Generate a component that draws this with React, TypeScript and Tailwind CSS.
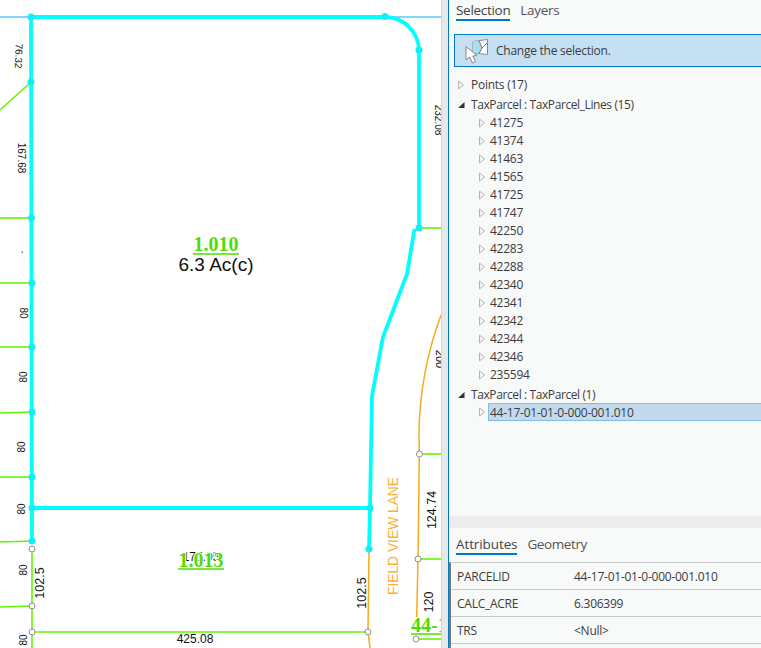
const SERIF = "font-['Liberation_Serif',serif]";

const stubs: [number, number, number, number][] = [
  [0, 110, 29, 84], [0, 218, 31, 218], [0, 283, 32, 283], [0, 347, 32, 347], [0, 413, 32, 412], [0, 477, 32, 477],
  [0, 542, 32, 541], [0, 607, 32, 606], [419, 228, 441, 228], [419, 454, 441, 454], [418, 559, 441, 559], [416, 639, 441, 639],
];
const cyanNodes: [number, number][] = [
  [31, 17], [31, 82], [31.5, 218], [32, 283], [32, 347], [32, 412], [32, 477], [32, 508], [32, 541], [385, 16.5], [419, 50], [419, 228], [370, 508], [369, 549],
];
const whiteNodes: [number, number][] = [[32, 549], [32, 606], [32, 632], [368, 632], [419.5, 454], [418, 559], [416, 639]];
const smallLabels: [string, number, number, number, number][] = [
  ["76.32", 18, 56, 92, 10], ["167.68", 21, 158, 90, 10], ["232.08", 438, 120, 90, 10],
  ["80", 23, 313, 90, 10], ["80", 24, 377, -90, 10], ["80", 22, 447, -90, 10], ["80", 22, 509, -90, 10], ["80", 24, 570, -90, 10], ["80", 24, 640, -90, 10],
  ["200", 439, 359, 90, 11],
  ["102.5", 41, 583, -90, 12.5], ["102.5", 363, 593, -90, 12.5], ["124.74", 433, 510, -90, 12.5], ["120", 430, 602, -90, 12.5],
];

function MapView() {
  return (
    <svg width="441" height="648" viewBox="0 0 441 648" className="block bg-white shrink-0 font-['Liberation_Sans',sans-serif]">
      <path d="M0 17H31M385 17H441" stroke="#5cc8f5" strokeWidth="1.5" fill="none" />
      <path d="M32 549V648" stroke="#62f500" strokeWidth="1.6" fill="none" />
      {stubs.map((s, i) => (
        <line key={i} x1={s[0]} y1={s[1]} x2={s[2]} y2={s[3]} stroke="#62f500" strokeWidth="1.6" />
      ))}
      <path d="M32 632H368" stroke="#62f500" strokeWidth="1.6" fill="none" />
      <path d="M369 549L368 632L370 648" stroke="#f8ab1e" strokeWidth="1.5" fill="none" />
      <path d="M441 315C430 345 420 385 419 430L419.3 454L418 559L416.7 617" stroke="#f8ab1e" strokeWidth="1.5" fill="none" />
      <path d="M31 17H385A34 34 0 0 1 419 50V228M414.5 229L407 274L383 337L372 396L370 508L369 549M31 17L32 541M32 508H370" stroke="#00ffff" strokeWidth="3.8" fill="none" />
      {cyanNodes.map((n, i) => (
        <circle key={i} cx={n[0]} cy={n[1]} r="3.5" fill="#14eef5" />
      ))}
      {whiteNodes.map((n, i) => (
        <circle key={i} cx={n[0]} cy={n[1]} r="3" fill="#fff" stroke="#8c8c8c" strokeWidth="1" />
      ))}
      {smallLabels.map((l, i) => (
        <text key={i} transform={`translate(${l[1]} ${l[2]}) rotate(${l[3]})`} textAnchor="middle" dominantBaseline="middle" fontSize={l[4]} fill="#111">
          {l[0]}
        </text>
      ))}
      <rect x="21.5" y="251.5" width="1.5" height="1.5" fill="#777" />
      <text x="195" y="643" textAnchor="middle" fontSize="12" fill="#111">425.08</text>
      <text x="201" y="561" textAnchor="middle" fontSize="12" fill="#111">175.05</text>
      <text transform="translate(394 536) rotate(-90)" textAnchor="middle" dominantBaseline="middle" fontSize="13.8" fill="#fbb034">FIELD VIEW LANE</text>
      <text x="216" y="271" textAnchor="middle" fontSize="19" fill="#111">6.3 Ac(c)</text>
      <text x="216" y="251" textAnchor="middle" fontSize="20" fontWeight="700" fill="#4fdd05" className={SERIF}>1.010</text>
      <path d="M193 254H239" stroke="#4fdd05" strokeWidth="1.5" />
      <text x="201" y="567" textAnchor="middle" fontSize="20" fontWeight="700" fill="#4fdd05" stroke="#fff" strokeWidth="2" paintOrder="stroke" className={SERIF}>1.013</text>
      <path d="M178 569H224" stroke="#4fdd05" strokeWidth="1.5" />
      <text x="411" y="632" fontSize="20" fontWeight="700" fill="#4fdd05" className={SERIF}>44-17</text>
      <path d="M411 634H441" stroke="#4fdd05" strokeWidth="1.5" />
    </svg>
  );
}

function Tri({ open }: { open?: boolean }) {
  return open ? (
    <svg width="8" height="8" viewBox="0 0 8 8" className="shrink-0"><path d="M7.5 1V7H1Z" fill="#333" /></svg>
  ) : (
    <svg width="8" height="10" viewBox="0 0 8 10" className="shrink-0"><path d="M1.5 1L6.5 5L1.5 9Z" fill="#f4f4f4" stroke="#b5b5b5" /></svg>
  );
}

const ids = ["41275", "41374", "41463", "41565", "41725", "41747", "42250", "42283", "42288", "42340", "42341", "42342", "42344", "42346", "235594"];

function Row({ label, open, indent }: { label: string; open?: boolean; indent?: boolean }) {
  return (
    <div className={indent ? "flex items-center h-[18px] pt-px pl-[29px] gap-[4px]" : "flex items-center h-[18px] pt-px pl-[8px] gap-[6px]"}>
      <Tri open={open} />
      <span className={open ? "tracking-[-0.4px]" : ""}>{label}</span>
    </div>
  );
}

function SelIcon() {
  return (
    <svg width="24" height="26" viewBox="0 0 24 26" className="shrink-0">
      <path d="M8 3.5L22.5 1.5V16.5L8 15Z" fill="#fff" stroke="#8d8d8d" />
      <path d="M8 3.5L14 2.5L17 10L14 15.6L8 15Z" fill="#a9dcf3" />
      <path d="M14 2.5L17 10L14 15.6M17 10L22 5" stroke="#777" fill="none" />
      <path d="M1 8.5V22L4.5 19L7.5 25L10.5 23.5L7.8 18L12 17.5Z" fill="#fff" stroke="#888" strokeLinejoin="round" />
    </svg>
  );
}

function AttrRow({ k, v }: { k: string; v: string }) {
  return (
    <div className="flex items-center h-[27px] pt-[2px] border-b border-[#c9cccd]">
      <span className="w-[123px] pl-[6px] shrink-0">{k}</span>
      <span>{v}</span>
    </div>
  );
}

export default function App() {
  return (
    <div className="flex w-[761px] h-[648px] overflow-hidden bg-white">
      <MapView />
      <div className="w-[7px] shrink-0 bg-[#e8e8e8] border-l border-[#d2d2d2]" />
      <div className="flex-1 min-w-0 flex flex-col bg-[#f8f9f9] border-l border-[#0079c1] text-[#3c3c3c] text-[12px] font-['Open_Sans',sans-serif] tracking-[-0.25px]">
        <div className="flex items-start h-[34px] pl-[7px] gap-[10px] text-[13.5px] tracking-[-0.3px] text-[#444]">
          <span className="h-[21px] leading-[20px] border-b-[2px] border-[#0079c1]">Selection</span>
          <span className="leading-[20px] text-[#555]">Layers</span>
        </div>
        <div className="flex items-center h-[33px] ml-[5px] pl-[10px] gap-[7px] bg-[#c5e0f3] border border-r-0 border-[#0079c1]">
          <SelIcon />
          <span>Change the selection.</span>
        </div>
        <div className="mt-[8px]">
          <Row label="Points (17)" />
          <div className="mt-[2px]"><Row label="TaxParcel : TaxParcel_Lines (15)" open /></div>
          {ids.map((id) => <Row key={id} label={id} indent />)}
          <div className="mt-[2px]"><Row label="TaxParcel : TaxParcel (1)" open /></div>
          <div className="flex items-center h-[18px] pl-[29px] gap-[2px]">
            <Tri />
            <span className="flex-1 h-[18px] leading-[17px] pl-[1px] bg-[#c3daee] border border-r-0 border-[#7fbce6]">44-17-01-01-0-000-001.010</span>
          </div>
        </div>
        <div className="flex-1" />
        <div className="h-[12px] bg-[#ececec]" />
        <div className="flex items-start h-[34px] pt-[6px] pl-[7px] gap-[10px] text-[13.5px] text-[#444]">
          <span className="h-[21px] leading-[20px] border-b-[2px] border-[#0079c1] font-medium tracking-[-0.1px]">Attributes</span>
          <span className="leading-[20px] text-[#555] tracking-[-0.4px]">Geometry</span>
        </div>
        <div className="h-[86px] border-t border-[#c9cccd] border-l-[2px] border-l-[#777]">
          <AttrRow k="PARCELID" v="44-17-01-01-0-000-001.010" />
          <AttrRow k="CALC_ACRE" v="6.306399" />
          <AttrRow k="TRS" v="<Null>" />
        </div>
      </div>
    </div>
  );
}
